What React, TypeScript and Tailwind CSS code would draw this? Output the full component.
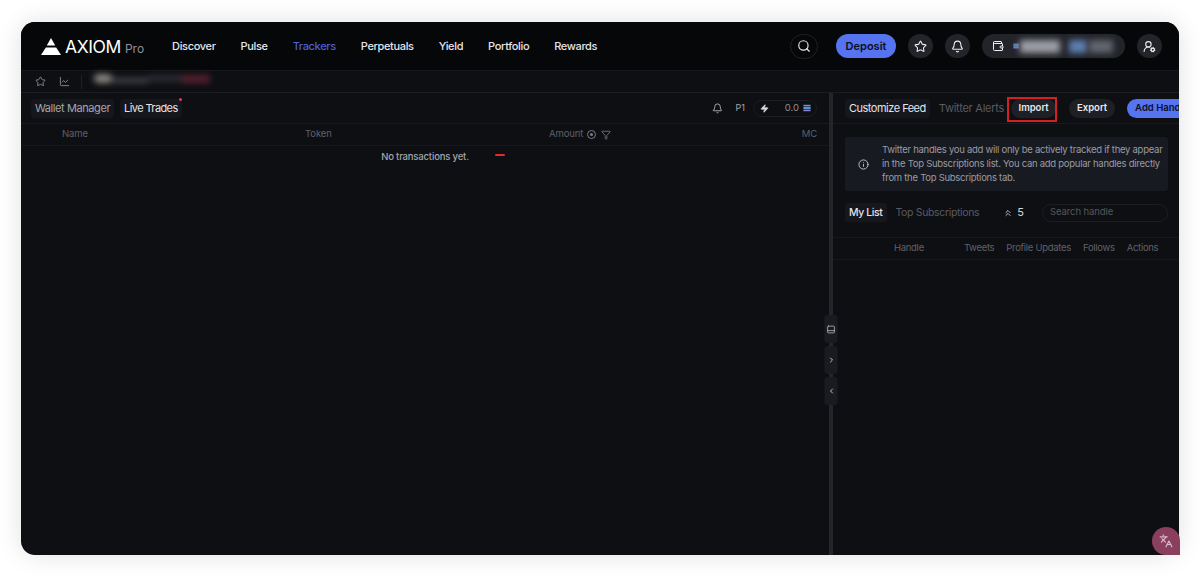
import { Bell, ChartLine, ChevronLeft, ChevronRight, ChevronsUp, Filter, Info, Languages, PanelBottom, Search, Star, UserRoundCog, Wallet, Zap } from "lucide-react";

const navItems = ["Discover", "Pulse", "Trackers", "Perpetuals", "Yield", "Portfolio", "Rewards"];

function SolanaMark({ size = 8 }: { size?: number }) {
  return (
    <svg width={size} height={size} viewBox="0 0 10 10" className="shrink-0">
      <rect x="0.5" y="1" width="9" height="2" fill="#6d8cf0" />
      <rect x="0.5" y="4" width="9" height="2" fill="#5fc7d8" />
      <rect x="0.5" y="7" width="9" height="2" fill="#8f7cf0" />
    </svg>
  );
}

function Logo() {
  return (
    <div className="flex items-end">
      <svg width="20" height="17" viewBox="0 0 20 17" className="mb-[2px]">
        <polygon points="10,0 14.2,7.5 5.8,7.5" fill="#fff" />
        <polygon points="4.8,9.5 15.2,9.5 20,17 0,17" fill="#fff" />
      </svg>
      <span className="ml-[4px] text-[17.5px] leading-[21px] tracking-[-0.4px] text-white">AXIOM</span>
      <span className="ml-[4px] text-[12px] leading-[17px] text-[#8f9099]">Pro</span>
    </div>
  );
}

function TopBar() {
  return (
    <header className="flex h-[49px] shrink-0 items-center border-b border-[#17181d] bg-[#060709] pl-[20px] pr-[17px]">
      <Logo />
      <nav className="ml-[28px] flex items-center gap-[25px] text-[11px] font-medium tracking-[-0.35px] text-[#e4e4ea]">
        {navItems.map((item) => (
          <span className={item === "Trackers" ? "text-[#4f5fd0]" : ""} key={item}>
            {item}
          </span>
        ))}
      </nav>
      <div className="ml-auto flex items-center">
        <div className="flex h-[25px] w-[28px] items-center justify-center rounded-full border border-[#1f2026]">
          <Search className="text-[#e8e8ee]" size={14} />
        </div>
        <div className="ml-[18px] flex h-[24px] w-[60px] items-center justify-center rounded-full bg-[#5673f0] text-[11px] font-semibold text-[#0b0e24]">
          Deposit
        </div>
        <div className="ml-[12px] flex h-[24px] w-[25px] items-center justify-center rounded-full bg-[#22242a]">
          <Star className="text-[#eeeef2]" size={13} />
        </div>
        <div className="ml-[12px] flex h-[24px] w-[25px] items-center justify-center rounded-full bg-[#22242a]">
          <Bell className="text-[#eeeef2]" size={13} />
        </div>
        <div className="ml-[12px] flex h-[24px] w-[143px] items-center rounded-full bg-[#22242a] pl-[10px]">
          <Wallet className="text-[#eeeef2]" size={12} />
          <span className="ml-[9px]">
            <SolanaMark size={6} />
          </span>
          <div className="ml-[1px] h-[13px] w-[40px] bg-[#9c9ea6] blur-[3px]" />
          <div className="ml-[9px] h-[13px] w-[18px] bg-[#5f7fb0] blur-[3px]" />
          <div className="ml-[2px] h-[13px] w-[24px] bg-[#62656d] blur-[3px]" />
        </div>
        <div className="ml-[12px] flex h-[24px] w-[25px] items-center justify-center rounded-full bg-[#22242a]">
          <UserRoundCog className="text-[#eeeef2]" size={13} />
        </div>
      </div>
    </header>
  );
}

function SubBar() {
  return (
    <div className="flex h-[22px] shrink-0 items-center border-b border-[#1c1d22] bg-[#0e0f13] pl-[14px]">
      <Star className="text-[#8b8c93]" size={11} />
      <ChartLine className="ml-[13px] text-[#8b8c93]" size={11} />
      <div className="ml-[11px] h-[14px] w-px bg-[#1f2026]" />
      <div className="ml-[12px] flex -translate-y-[3px] items-center blur-[3px]">
        <div className="h-[9px] w-[18px] rounded-full bg-[#8d8780]" />
        <div className="h-[5px] w-[36px] translate-y-[2px] bg-[#45474f]" />
        <div className="h-[7px] w-[34px] bg-[#2a2c34]" />
        <div className="h-[8px] w-[28px] bg-[#57202f]" />
      </div>
    </div>
  );
}

function LeftPanel() {
  return (
    <section className="flex min-w-0 flex-1 flex-col">
      <div className="flex h-[31px] shrink-0 items-center border-b border-[#191a1f] pl-[10px] pr-[12px]">
        <div className="rounded-[4px] bg-[#16171d] px-[4px] py-[2px] text-[11px] leading-[15px] tracking-[-0.42px] text-[#a4a5ad]">Wallet Manager</div>
        <div className="relative ml-[6px] rounded-[4px] bg-[#16171d] px-[4px] py-[2px] text-[11px] leading-[15px] tracking-[-0.6px] text-[#e4e4ea]">
          Live Trades
          <span className="absolute right-[0px] top-[-1px] h-[3px] w-[3px] rounded-full bg-[#d8386f]" />
        </div>
        <div className="ml-auto flex items-center">
          <Bell className="text-[#b4b5bb]" size={11} />
          <span className="ml-[13px] text-[9px] text-[#a4a5ad]">P1</span>
          <div className="ml-[8px] flex h-[17px] w-[64px] items-center rounded-full border border-[#1c1d23] pl-[6px] pr-[5px]">
            <Zap className="fill-[#d8d8de] text-[#d8d8de]" size={9} />
            <span className="ml-auto mr-[4px] text-[9.5px] text-[#8b8c93]">0.0</span>
            <SolanaMark />
          </div>
        </div>
      </div>
      <div className="flex h-[22px] shrink-0 items-center border-b border-[#17181d] pr-[12px] text-[9.5px] tracking-[-0.1px] text-[#5f6068]">
        <span className="ml-[41px] w-[243px]">Name</span>
        <span className="w-[244px]">Token</span>
        <span>Amount</span>
        <span className="ml-[4px] flex h-[9px] w-[9px] items-center justify-center rounded-full border border-[#7a7b82]">
          <span className="h-[3px] w-[3px] rounded-full bg-[#7a7b82]" />
        </span>
        <Filter className="ml-[5px] text-[#7a7b82]" size={10} />
        <span className="ml-auto">MC</span>
      </div>
      <div className="relative flex h-[23px] items-center justify-center text-[9.5px] font-medium tracking-[-0.17px] text-[#a4a5ad]">
        No transactions yet.
        <span className="absolute left-[474px] top-[8px] h-[2px] w-[10px] rounded-full bg-[#e02c2c]" />
      </div>
    </section>
  );
}

function RightPanel() {
  return (
    <section className="relative flex w-[346px] shrink-0 flex-col overflow-hidden">
      <div className="flex h-[31px] shrink-0 items-center whitespace-nowrap border-b border-[#191a1f] pl-[12px]">
        <div className="rounded-[4px] bg-[#16171d] px-[4px] py-[2px] text-[11px] leading-[15px] tracking-[-0.5px] text-[#e4e4ea]">Customize Feed</div>
        <span className="ml-[9px] text-[11px] tracking-[-0.25px] text-[#595a62]">Twitter Alerts</span>
        <div className="ml-[7px] flex h-[19px] w-[45px] shrink-0 items-center justify-center rounded-full bg-[#1e2026] text-[9.5px] font-semibold text-[#e8e8ee]">Import</div>
        <div className="ml-[13px] flex h-[19px] w-[46px] shrink-0 items-center justify-center rounded-full bg-[#1e2026] text-[9.5px] font-semibold text-[#e8e8ee]">Export</div>
        <div className="ml-[12px] flex h-[19px] w-[70px] shrink-0 items-center justify-start rounded-full bg-[#5673f0] pl-[8px] text-[9.5px] font-semibold text-[#0b0e24]">Add Handle</div>
      </div>
      <div className="mx-[12px] mt-[13px] flex h-[54px] w-[323px] items-center rounded-[3px] bg-[#181a21] pl-[13px]">
        <Info className="shrink-0 text-[#c8c9cf]" size={11} />
        <p className="ml-[13px] w-[284px] text-[9.5px] leading-[14px] tracking-[-0.27px] text-[#9a9ba3]">
          Twitter handles you add will only be actively tracked if they appear in the Top Subscriptions list. You can add popular handles directly from the Top Subscriptions tab.
        </p>
      </div>
      <div className="mt-[12px] flex h-[19px] items-center whitespace-nowrap pl-[12px] pr-[11px]">
        <div className="rounded-[3px] bg-[#16171d] px-[4px] py-[2px] text-[10.5px] font-medium leading-[15px] tracking-[-0.4px] text-[#e4e4ea]">My List</div>
        <span className="ml-[9px] text-[10.5px] tracking-[-0.35px] text-[#595a62]">Top Subscriptions</span>
        <ChevronsUp className="ml-[24px] text-[#d8d8de]" size={10} />
        <span className="ml-[4px] text-[11px] text-[#d8d8de]">5</span>
        <div className="ml-auto flex h-[18px] w-[126px] items-center rounded-full border border-[#1c1d23] pl-[7px] text-[9.5px] tracking-[-0.1px] text-[#55565e]">Search handle</div>
      </div>
      <div className="mt-[15px] flex h-[23px] shrink-0 items-center whitespace-nowrap border-y border-[#17181d] text-[9.5px] tracking-[-0.3px] text-[#5f6068]">
        <span className="ml-[61px]">Handle</span>
        <span className="ml-[40px]">Tweets</span>
        <span className="ml-[12px]">Profile Updates</span>
        <span className="ml-[12px]">Follows</span>
        <span className="ml-[12px]">Actions</span>
      </div>
    </section>
  );
}

function Divider() {
  return (
    <div className="relative w-[4px] shrink-0 bg-[#24252b]">
      <div className="absolute left-1/2 top-[222px] flex -translate-x-1/2 flex-col gap-[3px] text-[#c0c1c7]">
        <div className="flex h-[28px] w-[13px] items-center justify-center rounded-[3px] bg-[#1a1b20]">
          <PanelBottom size={9} />
        </div>
        <div className="flex h-[28px] w-[13px] items-center justify-center rounded-[3px] bg-[#1a1b20]">
          <ChevronRight size={8} strokeWidth={3} />
        </div>
        <div className="flex h-[28px] w-[13px] items-center justify-center rounded-[3px] bg-[#1a1b20]">
          <ChevronLeft size={8} strokeWidth={3} />
        </div>
      </div>
    </div>
  );
}

export default function App() {
  return (
    <div className="h-[576px] w-[1200px] overflow-hidden bg-white px-[21px] pt-[22px] font-['Inter',sans-serif]">
      <div className="relative h-[533px] w-[1158px] rounded-[14px] bg-[#0e0f13] shadow-[0_0_24px_rgba(0,0,0,0.12)]">
        <div className="flex h-full flex-col overflow-hidden rounded-[14px]">
          <TopBar />
          <SubBar />
          <main className="flex min-h-0 flex-1">
            <LeftPanel />
            <Divider />
            <RightPanel />
          </main>
        </div>
        <div className="absolute left-[986px] top-[75px] h-[25px] w-[50px] border-2 border-[#d42020]" />
        <div className="absolute bottom-0 right-[-1px] flex h-[28px] w-[28px] items-center justify-center rounded-l-full rounded-tr-full rounded-br-[10px] bg-[#8b3f5e] text-[#d9bcc8]">
          <Languages size={14} />
        </div>
      </div>
    </div>
  );
}
